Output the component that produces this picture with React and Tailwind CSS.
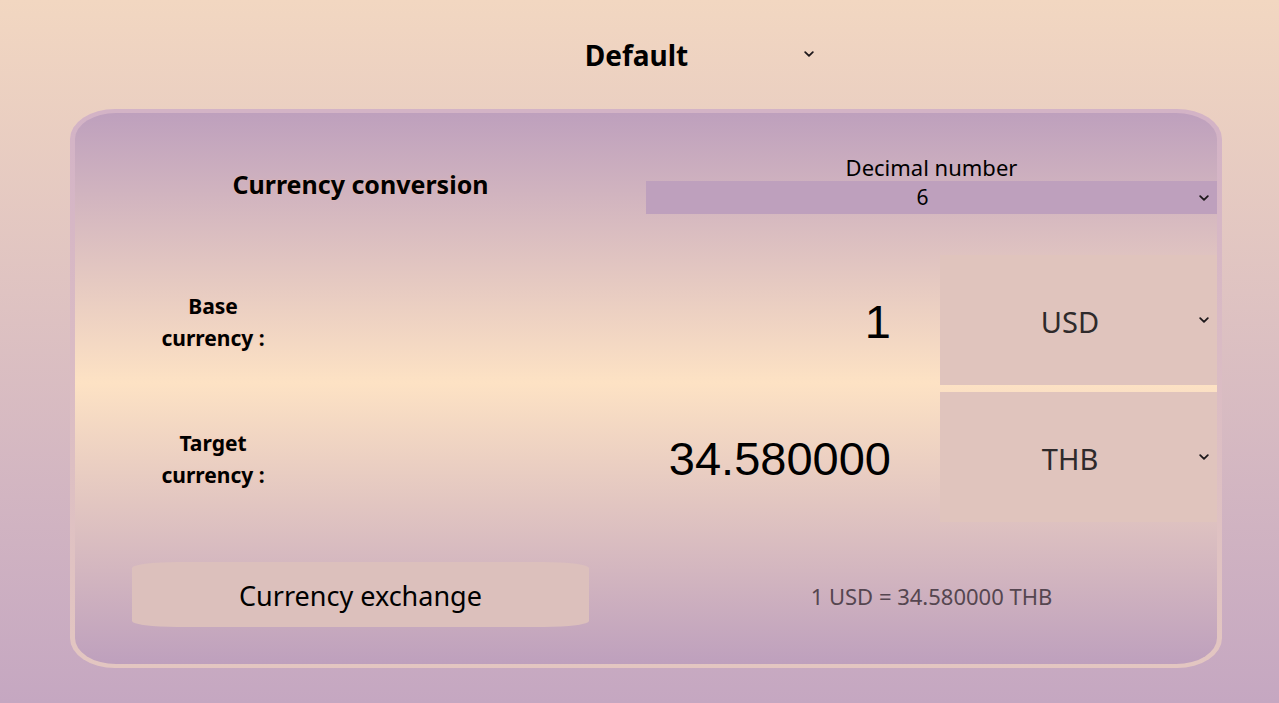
import React from 'react';

const Chevron = ({ className = '' }) => (
  <svg className={className} width="10" height="6" viewBox="0 0 10 6" fill="none">
    <path d="M1.2 1.2L5 4.8l3.8-3.6" stroke="#1d181b" strokeWidth="1.8" strokeLinecap="round" strokeLinejoin="round" />
  </svg>
);

const CurrencyRow = ({ label1, label2, amount, code }) => (
  <div className="flex h-[130px]">
    <div className="w-[276px] flex flex-col items-center justify-center pt-[3px] text-[21px] leading-[32px] font-bold text-black [text-shadow:0_0_2px_rgba(255,190,160,0.7)]">
      <span>{label1}</span>
      <span>{label2}</span>
    </div>
    <div className="flex-1 flex items-center justify-end pr-[49px] pt-[5px] font-['Liberation_Sans',Arial,sans-serif] text-[47px] text-black">
      {amount}
    </div>
    <div className="relative w-[277px] bg-[#e0c4bd] flex items-center justify-center pr-[17px] pt-[3px] text-[29px] text-[#2e2a2b]">
      {code}
      <Chevron className="absolute right-[8px] top-1/2 -translate-y-1/2" />
    </div>
  </div>
);

export default function App() {
  return (
    <div className="min-h-[703px] w-full bg-gradient-to-b from-[#f2d7c1] to-[#c5a7c1] font-['Noto_Sans',sans-serif] flex flex-col items-center pt-[30px]">
      {/* theme picker */}
      <div className="relative w-[360px] h-[50px] flex items-center justify-center pr-[6px] text-[28px] font-bold text-black">
        Default
        <Chevron className="absolute right-[6px] top-[21px]" />
      </div>

      {/* card */}
      <div className="mt-[29px] ml-[13px] w-[1152px] p-[4px_5px] rounded-[45px/30px] bg-gradient-to-b from-[#d3b3c6] to-[#e3c6c1]">
        <div className="rounded-[41px/26px] bg-[linear-gradient(to_bottom,#bea0bd_0%,#fde2c4_49%,#bea0bd_100%)] flex flex-col">
          {/* header */}
          <div className="grid grid-cols-2 h-[142px]">
            <div className="flex items-center justify-center pt-[2px] text-[25px] font-bold text-black [text-shadow:0_0_2px_rgba(255,190,160,0.7)]">
              Currency conversion
            </div>
            <div className="flex flex-col justify-center">
              <div className="text-center text-[22px] leading-[27px] text-black">Decimal number</div>
              <div className="relative h-[33px] bg-[#bea0bd] flex items-center justify-center pr-[18px] text-[21px] text-black">
                6
                <Chevron className="absolute right-[8px] top-1/2 -translate-y-1/2" />
              </div>
            </div>
          </div>

          {/* amounts */}
          <div className="flex flex-col gap-[7px]">
            <CurrencyRow label1="Base" label2="currency :" amount="1" code="USD" />
            <CurrencyRow label1="Target" label2="currency :" amount="34.580000" code="THB" />
          </div>

          {/* footer */}
          <div className="grid grid-cols-2 h-[142px] items-center">
            <div className="flex justify-center pt-[2px]">
              <button className="w-[457px] h-[65px] pt-[5px] bg-[#dcc0bc] rounded-[45px/6px] text-[27px] text-black">
                Currency exchange
              </button>
            </div>
            <div className="text-center text-[22px] text-[#554650] pt-[6px]">1 USD = 34.580000 THB</div>
          </div>
        </div>
      </div>
    </div>
  );
}
